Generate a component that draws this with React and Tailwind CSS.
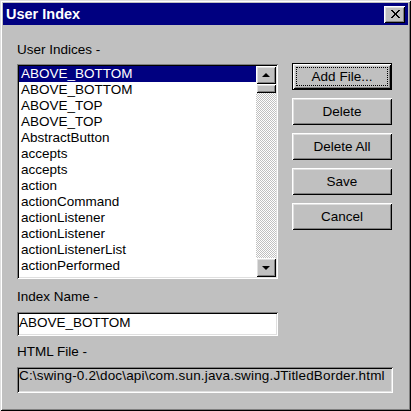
const raised =
  'shadow-[inset_1px_1px_#fff,inset_-1px_-1px_#000,inset_2px_2px_#dfdfdf,inset_-2px_-2px_#808080]'
const sunken =
  'shadow-[inset_1px_1px_#808080,inset_-1px_-1px_#fff,inset_2px_2px_#000,inset_-2px_-2px_#dfdfdf]'

const indices = [
  'ABOVE_BOTTOM',
  'ABOVE_BOTTOM',
  'ABOVE_TOP',
  'ABOVE_TOP',
  'AbstractButton',
  'accepts',
  'accepts',
  'action',
  'actionCommand',
  'actionListener',
  'actionListener',
  'actionListenerList',
  'actionPerformed',
]

// rows of the close glyph, [x, width]
const closeGlyph = [
  [[0, 2], [7, 2]],
  [[1, 2], [6, 2]],
  [[2, 2], [5, 2]],
  [[3, 3]],
  [[3, 3]],
  [[2, 2], [5, 2]],
  [[1, 2], [6, 2]],
  [[0, 2], [7, 2]],
]

function Arrow({ down }) {
  return (
    <svg width="8" height="4" viewBox="0 0 8 4" className={down ? 'rotate-180' : ''}>
      <polygon points="0,4 8,4 4,0" fill="#000" />
    </svg>
  )
}

function DialogButton({ children, isDefault }) {
  if (isDefault) {
    return (
      <div className="h-[27px] border border-black">
        <div className={`relative flex h-full items-center justify-center ${raised}`}>
          <span className="pointer-events-none absolute inset-[3px] border border-dotted border-black" />
          {children}
        </div>
      </div>
    )
  }
  return <div className={`flex h-[27px] items-center justify-center ${raised}`}>{children}</div>
}

export default function App() {
  return (
    <div className="h-[411px] w-[411px] bg-[#c0c0c0] p-[3px] font-['Liberation_Sans',Arial,sans-serif] text-[13.5px] leading-[16px] text-black shadow-[inset_1px_1px_#dfdfdf,inset_-1px_-1px_#000,inset_2px_2px_#fff,inset_-2px_-2px_#808080]">
      <div className="flex h-[22px] items-center bg-[#000080] px-[3px]">
        <span className="flex-1 text-[14.5px] font-bold text-white">User Index</span>
        <div className={`flex h-[17px] w-[21px] items-center justify-center bg-[#c0c0c0] pl-[1px] ${raised}`}>
          <svg width="9" height="8" viewBox="0 0 9 8" shapeRendering="crispEdges">
            {closeGlyph.map((row, y) =>
              row.map(([x, w]) => <rect key={`${y}-${x}`} x={x} y={y} width={w} height="1" fill="#000" />)
            )}
          </svg>
        </div>
      </div>

      <div className="pl-[14px] pt-[17px]">
        <div>User Indices -</div>

        <div className="mt-[6px] flex items-start">
          <div className="w-[261px]">
            <div className={`flex h-[215px] bg-white p-[2px] ${sunken}`}>
              <div className="flex-1">
                {indices.map((name, i) => (
                  <div
                    key={i}
                    className={`h-[16px] pl-[2px] ${i === 0 ? 'bg-[#000080] text-white' : ''}`}
                  >
                    {name}
                  </div>
                ))}
              </div>
              <div className="flex w-[20px] flex-col">
                <div className={`flex h-[18px] items-center justify-center bg-[#c0c0c0] ${raised}`}>
                  <Arrow />
                </div>
                <div className={`h-[9px] bg-[#c0c0c0] ${raised}`} />
                <div className="flex-1 bg-[repeating-conic-gradient(#c0c0c0_0%_25%,#fff_0%_50%)] bg-[length:2px_2px]" />
                <div className={`flex h-[19px] items-center justify-center bg-[#c0c0c0] ${raised}`}>
                  <Arrow down />
                </div>
              </div>
            </div>

            <div className="mt-[10px]">Index Name -</div>
            <div className={`mt-[7px] h-[24px] bg-white pl-[2px] pt-[3px] ${sunken}`}>ABOVE_BOTTOM</div>
          </div>

          <div className="-mt-[1px] ml-[14px] flex w-[100px] flex-col gap-[8px]">
            <DialogButton isDefault>Add File...</DialogButton>
            <DialogButton>Delete</DialogButton>
            <DialogButton>Delete All</DialogButton>
            <DialogButton>Save</DialogButton>
            <DialogButton>Cancel</DialogButton>
          </div>
        </div>

        <div className="mt-[8px]">HTML File -</div>
        <div className={`mt-[7px] h-[26px] w-[376px] overflow-hidden whitespace-nowrap pl-[2px] pt-[1px] tracking-[0.17px] ${sunken}`}>
          C:\swing-0.2\doc\api\com.sun.java.swing.JTitledBorder.html
        </div>
      </div>
    </div>
  )
}
